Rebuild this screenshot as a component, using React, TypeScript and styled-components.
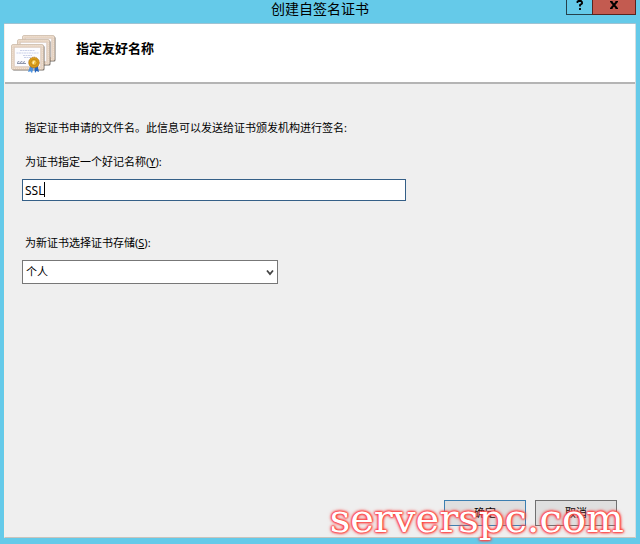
import React, { useState } from "react";
import styled, { createGlobalStyle, css } from "styled-components";

const GlobalStyle = createGlobalStyle`
  *, *::before, *::after { box-sizing: border-box; }
  body { margin: 0; background: #65cae9; }
  button, input, select { font: inherit; color: inherit; }
`;

const Window = styled.div`
  position: relative;
  display: flex;
  flex-direction: column;
  min-height: 100vh;
  padding: 0 4px 6px;
  background: #65cae9;
  color: #000;
  font-family: "Noto Sans", "Noto Sans CJK SC", sans-serif;
  font-size: 11px;
  line-height: 16px;
`;

const TitleBar = styled.header`
  display: grid;
  grid-template-columns: 1fr auto 1fr;
  height: 24px;
  border-bottom: 1px solid #9fc3d3;
`;

const Title = styled.h1`
  grid-column: 2;
  margin: 0;
  font-size: 14px;
  font-weight: 400;
  line-height: 18px;
`;

const Controls = styled.div`
  display: flex;
  justify-content: flex-end;
  align-items: flex-start;
`;

const ControlButton = styled.button<{ $close?: boolean }>`
  display: grid;
  place-items: center;
  width: 27px;
  height: 15px;
  padding: 0 0 4px;
  border: 1px solid #25414b;
  border-top: 0;
  background: #65cae9;
  ${({ $close }) =>
    $close &&
    css`
      width: 44px;
      margin-left: -1px;
      border-color: #59241f;
      background: #c35b50;
    `}
`;

const Glyph = styled.svg`
  display: block;
`;

const Client = styled.form`
  flex: 1;
  display: flex;
  flex-direction: column;
  background: #efefef;
  border-right: 1px solid #d5dde0;
  border-bottom: 1px solid #c9c4bd;
  border-left: 1px solid #f8eee4;
`;

const Banner = styled.div`
  display: flex;
  align-items: flex-start;
  gap: 19px;
  height: 60px;
  padding: 10px 6px 0;
  background: #fff;
  border-bottom: 2px solid #b4b4b4;
`;

const Heading = styled.h2`
  margin: 4px 0 0;
  font-size: 13px;
  font-weight: 700;
  line-height: 20px;
`;

const Body = styled.div`
  flex: 1;
  padding: 36px 17px 0;
`;

const Intro = styled.p`
  margin: 0 0 18px;
  padding-left: 3px;
`;

const Label = styled.label`
  display: block;
  padding-left: 3px;
  margin-bottom: 9px;
`;

const TextField = styled.div`
  position: relative;
  max-width: 384px;
  margin-bottom: 34px;
`;

const Input = styled.input`
  display: block;
  width: 100%;
  height: 22px;
  padding: 0 2px;
  border: 1px solid #345f87;
  border-radius: 0;
  background: #fff;
  outline: 0;
  font-size: 12px;
  caret-color: transparent;
`;

const Caret = styled.span`
  position: absolute;
  top: 3px;
  left: 22px;
  width: 1px;
  height: 15px;
  background: #000;
`;

const SelectField = styled.div`
  position: relative;
  max-width: 256px;
`;

const Select = styled.select`
  display: block;
  width: 100%;
  height: 24px;
  padding: 0 20px 0 3px;
  border: 1px solid #777;
  border-radius: 0;
  background: #fff;
  appearance: none;
  outline: 0;
`;

const Chevron = styled.svg`
  position: absolute;
  top: 9px;
  right: 4px;
  pointer-events: none;
`;

const Footer = styled.footer`
  display: flex;
  justify-content: flex-end;
  gap: 9px;
  padding: 0 18px 11px;
`;

const ActionButton = styled.button<{ $primary?: boolean }>`
  width: 82px;
  height: 26px;
  padding: 0;
  border: 1px solid ${({ $primary }) => ($primary ? "#3c7fb1" : "#707070")};
  background: #dfdfdf;
`;

const Watermark = styled.div`
  position: absolute;
  right: 16px;
  bottom: 4px;
  color: #fff;
  font-family: "DejaVu Serif", serif;
  font-size: 40px;
  line-height: 44px;
  text-shadow: 0 0 1px #ff4040, 0 0 2px #ff4040, 0 0 2px #ff4040, 0 0 3px #ff4040, 0 0 3px #ff5050, 0 0 4px #ff6060;
  pointer-events: none;
`;

function CertificateSheet({ x, y }: { x: number; y: number }) {
  return (
    <g transform={`translate(${x} ${y})`}>
      <rect x="1.5" y="1.5" width="32" height="25" rx="1.5" fill="#4a403a" opacity="0.75" />
      <rect x="0.5" y="0.5" width="32" height="25" rx="1.5" fill="#e6d3c1" stroke="#cdbbaa" strokeWidth="0.8" />
      <rect x="1.6" y="1.6" width="29.8" height="22.8" fill="none" stroke="#f5e9dd" strokeWidth="0.8" strokeDasharray="1 1" />
      <rect x="3.5" y="3.5" width="26" height="19" fill="#fcfcff" stroke="#d8c8bc" strokeWidth="0.5" />
    </g>
  );
}

function CertificatesIcon() {
  return (
    <svg width="46" height="40" viewBox="0 0 46 40" aria-hidden="true">
      <CertificateSheet x={11} y={1} />
      <CertificateSheet x={6} y={5} />
      <CertificateSheet x={0} y={10} />
      <path d="M9 16.5h15M5.5 19h22M12 21.5h9M13 23.5h7" stroke="#c6cde6" strokeWidth="0.9" strokeDasharray="2 .5" />
      <path d="M6 28.5l2-1 1 1 2-1 1 1 2-1M6 29.5h9" fill="none" stroke="#747c98" strokeWidth="0.8" />
      <path d="M19.5 31l-2.500 7 2.500-.8 1.500 2 2-7z" fill="#4c92df" />
      <path d="M23 31l1 8 1.500-2 2.500 1-1.500-7z" fill="#2264bd" />
      <circle cx="23" cy="28.5" r="5.3" fill="#d99a17" stroke="#a96b0b" strokeWidth="0.8" strokeDasharray="1.5 .5" />
      <circle cx="23" cy="28.5" r="3" fill="#eebb36" stroke="#b27a0e" strokeWidth="0.7" />
      <path d="M22 30l1.3-3.3M21.5 28.3h1.500" stroke="#fff4c5" strokeWidth="1.1" />
    </svg>
  );
}

export default function App() {
  const [name, setName] = useState("SSL");
  return (
    <>
      <GlobalStyle />
      <Window>
        <TitleBar>
          <Title>创建自签名证书</Title>
          <Controls>
            <ControlButton type="button" aria-label="帮助">
              <Glyph width="8" height="10" viewBox="0 0 8 10">
                <path d="M1.5 3V1.5L2.500 1h2.500l1 1v1.500L4 5v1.500M4 8v2" fill="none" stroke="#000" strokeWidth="1.8" />
              </Glyph>
            </ControlButton>
            <ControlButton type="button" aria-label="关闭" $close>
              <Glyph width="10" height="8" viewBox="0 0 10 8">
                <path d="M2 .5l6 7M8 .5l-6 7" fill="none" stroke="#000" strokeWidth="2" />
                <path d="M1 .5h2.500M6.500 .5H9M1 7.500h2.500M6.500 7.500H9" stroke="#000" />
              </Glyph>
            </ControlButton>
          </Controls>
        </TitleBar>
        <Client onSubmit={(e) => e.preventDefault()}>
          <Banner>
            <CertificatesIcon />
            <Heading>指定友好名称</Heading>
          </Banner>
          <Body>
            <Intro>指定证书申请的文件名。此信息可以发送给证书颁发机构进行签名:</Intro>
            <Label htmlFor="friendly-name">
              为证书指定一个好记名称(<u>Y</u>):
            </Label>
            <TextField>
              <Input id="friendly-name" type="text" value={name} onChange={(e) => setName(e.target.value)} />
              <Caret />
            </TextField>
            <Label htmlFor="store">
              为新证书选择证书存储(<u>S</u>):
            </Label>
            <SelectField>
              <Select id="store" defaultValue="personal">
                <option value="personal">个人</option>
              </Select>
              <Chevron width="8" height="7" viewBox="0 0 8 7" aria-hidden="true">
                <path d="M1 1.5l3 3.500 3-3.500" fill="none" stroke="#444" strokeWidth="1.8" />
              </Chevron>
            </SelectField>
          </Body>
          <Footer>
            <ActionButton type="submit" $primary>确定</ActionButton>
            <ActionButton type="button">取消</ActionButton>
          </Footer>
        </Client>
        <Watermark>serverspc.com</Watermark>
      </Window>
    </>
  );
}
